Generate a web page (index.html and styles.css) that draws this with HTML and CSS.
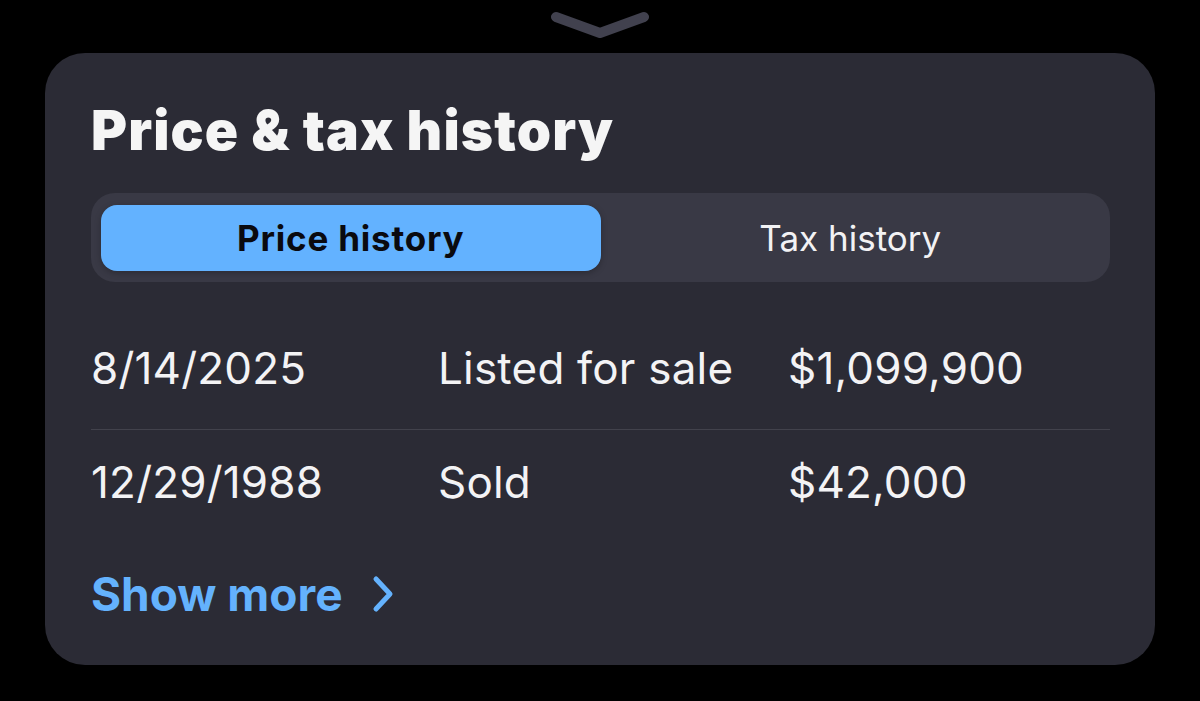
FILE: index.html
```html
<!DOCTYPE html>
<html lang="en">
<head>
<meta charset="utf-8">
<title>Price &amp; tax history</title>
<link rel="stylesheet" href="styles.css">
</head>
<body>
<div class="screen">
  <div class="handle">
    <svg width="100" height="30" viewBox="0 0 100 30"><path d="M6 7 L50 23 L94 7" fill="none" stroke="#41414e" stroke-width="10" stroke-linecap="round" stroke-linejoin="round"/></svg>
  </div>
  <section class="card">
    <h1 class="title">Price &amp; tax history</h1>
    <div class="segmented">
      <div class="seg seg-active">Price history</div>
      <div class="seg">Tax history</div>
    </div>
    <div class="rows">
      <div class="row row-first">
        <span>8/14/2025</span><span>Listed for sale</span><span>$1,099,900</span>
      </div>
      <div class="row row-last">
        <span>12/29/1988</span><span>Sold</span><span>$42,000</span>
      </div>
    </div>
    <a class="more" href="#">Show more
      <svg class="more-chev" width="22" height="38" viewBox="0 0 22 38"><path d="M4 4 L18 19 L4 34" fill="none" stroke="#64b2fd" stroke-width="5" stroke-linecap="round" stroke-linejoin="round"/></svg>
    </a>
  </section>
</div>
</body>
</html>
```
FILE: styles.css
```css
* { box-sizing: border-box; }
html, body { margin: 0; padding: 0; background: #000; }
body { font-family: Inter, "Noto Sans", sans-serif; color: #f3f3f5; }
.screen {
  width: 1200px;
  height: 701px;
  padding: 10px 45px 0 45px;
  display: flex;
  flex-direction: column;
  align-items: stretch;
  overflow: hidden;
}
.handle { display: flex; justify-content: center; height: 43px; }
.card {
  background: #2b2b35;
  border-radius: 40px;
  height: 612px;
  padding: 44px 45px 0 46px;
  display: flex;
  flex-direction: column;
}
.title {
  margin: 0;
  font-size: 55px;
  line-height: 66px;
  font-weight: 900;
  letter-spacing: 1.1px;
  color: #f5f5f5;
}
.segmented {
  margin-top: 30px;
  height: 89px;
  background: #393945;
  border-radius: 24px;
  padding: 12px 10px 11px 10px;
  display: grid;
  grid-template-columns: 1fr 1fr;
}
.seg {
  display: flex;
  align-items: center;
  justify-content: center;
  font-size: 35px;
  color: #f2f2f4;
}
.seg-active {
  background: #63b2ff;
  color: #0a0a0f;
  font-weight: 700;
  letter-spacing: 0.8px;
  border-radius: 16px;
  box-shadow: 0 2px 6px rgba(0,0,0,0.25);
}
.rows { display: flex; flex-direction: column; }
.row {
  display: grid;
  grid-template-columns: 347px 350px 1fr;
  font-size: 44px;
  line-height: 56px;
  letter-spacing: 0.2px;
}
.row-first { padding: 58px 0 33px; border-bottom: 1px solid #42424c; }
.row-last { padding: 24px 0 0; }
.more {
  margin-top: 56px;
  display: flex;
  align-items: center;
  gap: 29px;
  color: #64b2fd;
  text-decoration: none;
  font-size: 46px;
  font-weight: 700;
  line-height: 56px;
}
.more-chev { display: block; }
```
